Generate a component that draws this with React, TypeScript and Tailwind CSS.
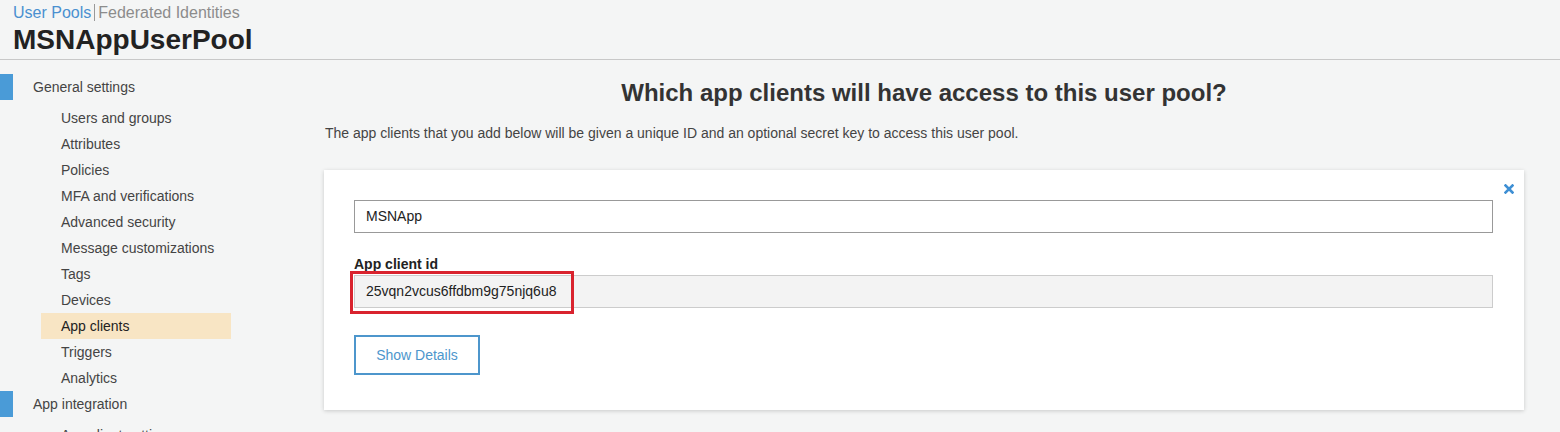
import React from "react";

const subItems = [
  "Users and groups",
  "Attributes",
  "Policies",
  "MFA and verifications",
  "Advanced security",
  "Message customizations",
  "Tags",
  "Devices",
  "App clients",
  "Triggers",
  "Analytics",
];

function SectionRow({ label }: { label: string }) {
  return (
    <div className="flex h-[26px] items-center">
      <div className="h-[26px] w-[13px] bg-[#4a9bd7]" />
      <span className="ml-[20px] text-[14px] text-[#444]">{label}</span>
    </div>
  );
}

function SubRow({ label, active }: { label: string; active?: boolean }) {
  return (
    <div
      className={
        active
          ? "ml-[41px] flex h-[26px] w-[190px] items-center bg-[#f8e5c4] pl-[20px] text-[14px] text-[#222]"
          : "ml-[41px] flex h-[26px] w-[190px] items-center pl-[20px] text-[14px] text-[#444]"
      }
    >
      {label}
    </div>
  );
}

export default function App() {
  return (
    <div className="h-[432px] w-[1560px] overflow-hidden bg-[#f4f5f5] font-['Liberation_Sans',Arial,sans-serif]">
      {/* header */}
      <div className="h-[60px] border-b border-[#c8c8c8] pl-[13px] pt-[3px]">
        <div className="flex items-center text-[16px] leading-[19px]">
          <span className="text-[#4a90d0]">User Pools</span>
          <span className="mx-[3px] h-[17px] w-px bg-[#999]" />
          <span className="text-[#8c8c8c]">Federated Identities</span>
        </div>
        <h1 className="mt-[1px] text-[28px] leading-[33px] font-bold text-[#222]">MSNAppUserPool</h1>
      </div>

      <div className="flex">
        {/* sidebar */}
        <div className="w-[324px] shrink-0 pt-[14px]">
          <SectionRow label="General settings" />
          <div className="mt-[5px]">
            {subItems.map((s) => (
              <SubRow key={s} label={s} active={s === "App clients"} />
            ))}
          </div>
          <SectionRow label="App integration" />
          <div className="mt-[5px]">
            <SubRow label="App client settings" />
          </div>
        </div>

        {/* main */}
        <div className="w-[1200px] shrink-0">
          <h2 className="mt-[19px] text-center text-[24px] leading-[28px] font-bold text-[#333]">
            Which app clients will have access to this user pool?
          </h2>
          <p className="mt-[18px] pl-px text-[14px] leading-[16px] text-[#444]">
            The app clients that you add below will be given a unique ID and an optional secret key to access this user pool.
          </p>

          <div className="relative mt-[29px] bg-white px-[30px] pt-[30px] pb-[35px] pr-[31px] shadow-[0_1px_4px_rgba(0,0,0,0.18)]">
            <button className="absolute top-[14px] right-[10px] text-[#3e8fd4]">
              <svg width="10" height="10" viewBox="0 0 10 10">
                <path d="M1.5 1.5 L8.5 8.5 M8.5 1.5 L1.5 8.5" stroke="currentColor" strokeWidth="2.6" strokeLinecap="square" />
              </svg>
            </button>

            <div className="flex h-[33px] items-center border border-[#999] pl-[11px] text-[14px] text-[#222]">
              MSNApp
            </div>

            <div className="mt-[21px] text-[14px] leading-[20px] font-bold text-[#222]">App client id</div>

            <div className="relative mt-[1px] flex h-[33px] items-center border border-[#ccc] bg-[#f3f3f3] pl-[11px] text-[14px] text-[#222]">
              25vqn2vcus6ffdbm9g75njq6u8
              <div className="absolute top-[-5px] left-[-5px] h-[43px] w-[224px] border-[3px] border-[#d9232e]" />
            </div>

            <button className="mt-[27px] h-[40px] w-[126px] border-2 border-[#4d96cc] text-[14px] text-[#4d96cc]">
              Show Details
            </button>
          </div>
        </div>
      </div>
    </div>
  );
}
